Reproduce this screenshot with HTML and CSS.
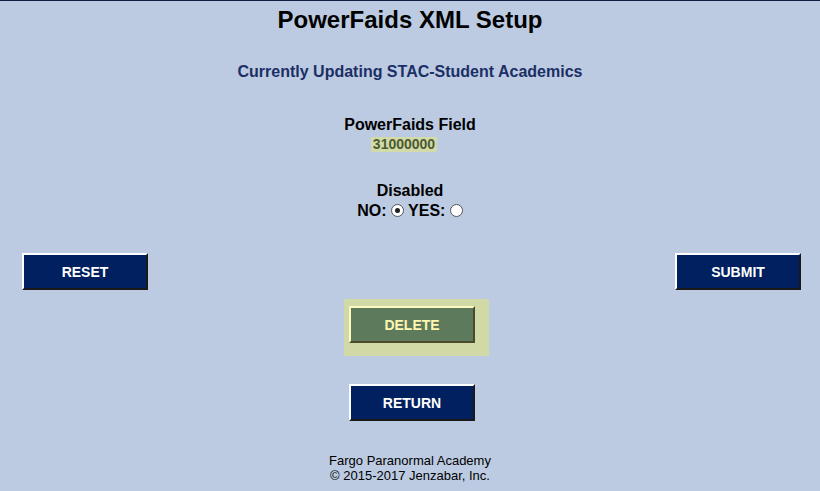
FILE: index.html
```html
<!DOCTYPE html>
<html lang="en">
<head>
    <meta charset="UTF-8">
    <title>PowerFaids XML Setup</title>
    <link rel="stylesheet" href="styles.css">
</head>
<body>

<header>
    <h1>PowerFaids XML Setup</h1>
    <h2>Currently Updating STAC-Student Academics</h2>
</header>

<main>
    <div class="field">
        <div class="label">PowerFaids Field</div>
        <span class="code">31000000</span>
    </div>

    <div class="field disabled">
        <div class="label">Disabled</div>
        <div class="radios">
            NO: <span class="radio checked"></span>
            YES: <span class="radio"></span>
        </div>
    </div>

    <div class="actions">
        <button class="btn">RESET</button>
        <button class="btn">SUBMIT</button>
    </div>

    <div class="delete-row">
        <div class="delete-box">
            <button class="btn btn-delete">DELETE</button>
        </div>
    </div>

    <div class="return-row">
        <button class="btn">RETURN</button>
    </div>
</main>

<footer>
    <p>Fargo Paranormal Academy</p>
    <p>&copy; 2015-2017 Jenzabar, Inc.</p>
</footer>

</body>
</html>
```

FILE: styles.css
```css
body {
    margin: 0;
    height: 490px;
    font-family: "Liberation Sans", Arial, sans-serif;
    background-color: #bccbe1;
    border-top: 1px solid #0f1f3f;
    color: #000;
}

header {
    text-align: center;
}

h1 {
    margin: 0;
    padding-top: 5px;
    font-size: 24px;
    line-height: 28px;
}

h2 {
    margin: 28px 0 0;
    font-size: 16px;
    line-height: 19px;
    color: #1b2f66;
}

.field {
    text-align: center;
    font-weight: bold;
}

.field .label {
    margin-top: 34px;
    font-size: 16px;
    line-height: 20px;
}

.code {
    display: inline-block;
    margin-left: -12px;
    padding: 1px 2px;
    font-size: 14px;
    line-height: 13px;
    background-color: #d2daa8;
    color: #4b5a33;
}

.disabled .label {
    margin-top: 28px;
}

.radios {
    font-size: 16px;
    line-height: 20px;
}

.radio {
    display: inline-block;
    width: 11px;
    height: 11px;
    border: 1px solid #555;
    border-radius: 50%;
    background-color: #fff;
    vertical-align: -1px;
    position: relative;
}

.radio.checked::after {
    content: "";
    position: absolute;
    left: 3px;
    top: 3px;
    width: 5px;
    height: 5px;
    border-radius: 50%;
    background-color: #222;
}

.actions {
    display: flex;
    justify-content: space-between;
    margin-top: 32px;
    padding: 0 19px 0 22px;
}

.btn {
    width: 126px;
    height: 37px;
    border: 2px outset #fff;
    border-color: #fff #6e6e6e #6e6e6e #fff;
    background-color: #002060;
    color: #fff;
    font-family: "Liberation Sans", Arial, sans-serif;
    font-size: 14px;
    font-weight: bold;
    cursor: pointer;
}

.delete-row {
    display: flex;
    justify-content: center;
    margin-top: 9px;
}

.delete-box {
    margin-left: 13px;
    padding: 7px 14px 13px 5px;
    background-color: #d1d9a7;
}

.btn-delete {
    background-color: #5e7a5c;
    color: #fff6b0;
    border-color: #fff8c0 #a09a60 #a09a60 #fff8c0;
}

.return-row {
    display: flex;
    justify-content: center;
    margin-top: 28px;
}

.return-row .btn {
    margin-left: 4px;
}

footer {
    text-align: center;
    margin-top: 32px;
    font-size: 13px;
    line-height: 15px;
}

footer p {
    margin: 0;
}
```
